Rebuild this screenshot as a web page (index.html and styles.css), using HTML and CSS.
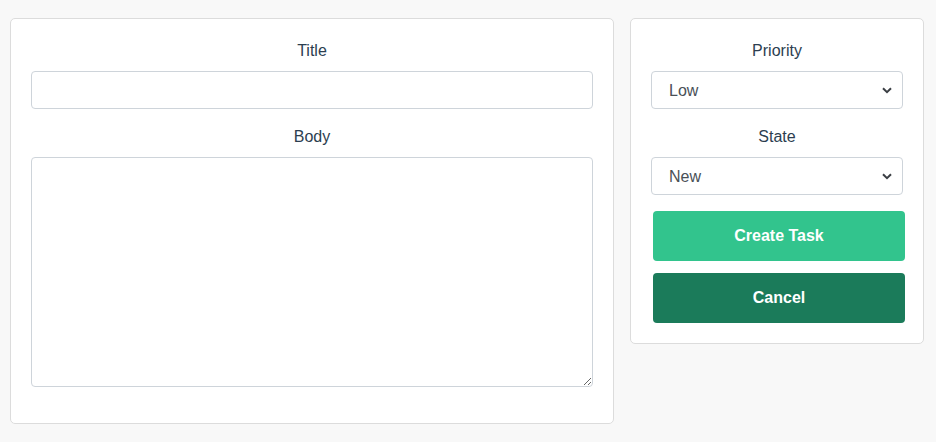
FILE: index.html
```html
<!DOCTYPE html>
<html lang="en">
<head>
<meta charset="utf-8">
<title>New Task</title>
<link rel="stylesheet" href="styles.css">
</head>
<body>
<div class="page">
  <form class="card main-card">
    <label class="label" for="title">Title</label>
    <input class="control" id="title" type="text">
    <label class="label gap" for="body">Body</label>
    <textarea class="control area" id="body"></textarea>
  </form>
  <div class="card side-card">
    <label class="label" for="priority">Priority</label>
    <div class="select-wrap">
      <select class="control select" id="priority">
        <option>Low</option>
        <option>Medium</option>
        <option>High</option>
      </select>
      <svg class="chevron" width="10" height="7" viewBox="0 0 10 7"><path d="M1 1.2 L5 5.2 L9 1.2" fill="none" stroke="#3b3f44" stroke-width="2"/></svg>
    </div>
    <label class="label gap" for="state">State</label>
    <div class="select-wrap">
      <select class="control select" id="state">
        <option>New</option>
        <option>In Progress</option>
        <option>Done</option>
      </select>
      <svg class="chevron" width="10" height="7" viewBox="0 0 10 7"><path d="M1 1.2 L5 5.2 L9 1.2" fill="none" stroke="#3b3f44" stroke-width="2"/></svg>
    </div>
    <button class="btn btn-create" type="button">Create Task</button>
    <button class="btn btn-cancel" type="button">Cancel</button>
  </div>
</div>
</body>
</html>
```
FILE: styles.css
```css
* { box-sizing: border-box; }
html, body {
  margin: 0;
  background: #f8f8f8;
  font-family: "Liberation Sans", Arial, sans-serif;
  font-size: 16px;
  color: #2c3e50;
}
.page {
  display: flex;
  align-items: flex-start;
  gap: 16px;
  padding: 18px 12px 0 10px;
}
.card {
  flex: none;
  background: #fff;
  border: 1px solid #dcdcdc;
  border-radius: 5px;
  display: flex;
  flex-direction: column;
  padding: 20px 20px 36px;
}
.main-card { width: 604px; margin: 0; }
.side-card { width: 294px; padding-bottom: 20px; }
.label {
  display: block;
  text-align: center;
  line-height: 24px;
  color: #2c3e50;
  margin-bottom: 8px;
}
.label.gap { margin-top: 16px; }
.control {
  display: block;
  width: 100%;
  height: 38px;
  border: 1px solid #ced4da;
  border-radius: 4px;
  background: #fff;
  font-family: inherit;
  font-size: 16px;
  color: #495057;
  padding: 6px 12px;
  margin: 0;
  outline: none;
}
.area {
  height: 230px;
  resize: vertical;
}
.select-wrap { position: relative; }
.select {
  appearance: none;
  -webkit-appearance: none;
  padding-left: 17px;
}
.chevron {
  position: absolute;
  right: 11px;
  top: 16px;
  pointer-events: none;
}
.btn {
  display: block;
  width: 252px;
  height: 50px;
  margin-left: 2px;
  border: none;
  border-radius: 4px;
  color: #fff;
  font-family: inherit;
  font-size: 16px;
  font-weight: bold;
}
.btn-create { background: #32c48d; margin-top: 16px; }
.btn-cancel { background: #1b7b5a; margin-top: 12px; }
```
